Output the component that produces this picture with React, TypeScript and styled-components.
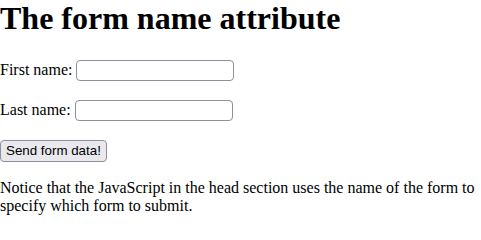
import styled, { createGlobalStyle } from 'styled-components';

const GlobalStyle = createGlobalStyle`
  body {
    margin: 0;
    font-family: "Liberation Serif", "Times New Roman", serif;
    font-size: 16px;
    color: #000;
    background: #fff;
  }
`;

const Title = styled.h1`
  font-size: 32px;
  font-weight: bold;
  margin: 0 0 21px;
`;

const Row = styled.p`
  margin: 16px 0;
`;

const Field = styled.input`
  box-sizing: border-box;
  font-family: Arial, "Liberation Sans", sans-serif;
  font-size: 13.33px;
  width: 158px;
  height: 21px;
  margin: 1.5px 0;
  padding: 1px 3px;
  border: 1px solid #8f8f9d;
  border-radius: 4px;
  background: #fff;
  vertical-align: baseline;
`;

const Submit = styled.button`
  box-sizing: border-box;
  font-family: Arial, "Liberation Sans", sans-serif;
  font-size: 13.33px;
  height: 22px;
  margin: 1.5px 0;
  padding: 0 5px;
  border: 1px solid #8f8f9d;
  border-radius: 4px;
  background: #e9e9ed;
  color: #000;
`;

const Note = styled.p`
  margin: 16px 0;
`;

export default function App() {
  return (
    <>
      <GlobalStyle />
      <Title>The form name attribute</Title>
      <form name="myForm" onSubmit={e => e.preventDefault()}>
        <Row>
          First name: <Field type="text" name="fname" />
        </Row>
        <Row>
          Last name: <Field type="text" name="lname" />
        </Row>
        <Row>
          <Submit type="submit">Send form data!</Submit>
        </Row>
      </form>
      <Note>
        Notice that the JavaScript in the head section uses the name of the form to specify which form to submit.
      </Note>
    </>
  );
}
